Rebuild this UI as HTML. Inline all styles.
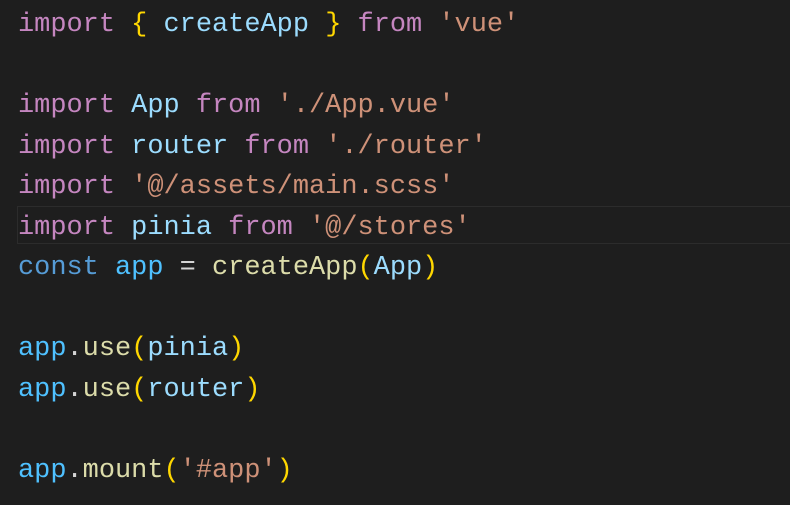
<!DOCTYPE html>
<html><head><style>
html,body{margin:0;padding:0;background:#1e1e1e;width:790px;height:505px;overflow:hidden}
pre{margin:0;position:absolute;left:18px;top:5px;font-family:"Liberation Mono",monospace;font-size:26.95px;line-height:40.5px;color:#d4d4d4}
.hl{position:absolute;left:17px;top:206px;width:780px;height:36px;border:1px solid #2c2c2c}
.k{color:#c586c0}.b{color:#ffd700}.v{color:#9cdcfe}.s{color:#ce9178}.c{color:#569cd6}.a{color:#4fc1ff}.f{color:#dcdcaa}
</style></head><body>
<div class="hl"></div>
<pre><span class="k">import</span> <span class="b">{</span> <span class="v">createApp</span> <span class="b">}</span> <span class="k">from</span> <span class="s">'vue'</span>

<span class="k">import</span> <span class="v">App</span> <span class="k">from</span> <span class="s">'./App.vue'</span>
<span class="k">import</span> <span class="v">router</span> <span class="k">from</span> <span class="s">'./router'</span>
<span class="k">import</span> <span class="s">'@/assets/main.scss'</span>
<span class="k">import</span> <span class="v">pinia</span> <span class="k">from</span> <span class="s">'@/stores'</span>
<span class="c">const</span> <span class="a">app</span> = <span class="f">createApp</span><span class="b">(</span><span class="v">App</span><span class="b">)</span>

<span class="a">app</span>.<span class="f">use</span><span class="b">(</span><span class="v">pinia</span><span class="b">)</span>
<span class="a">app</span>.<span class="f">use</span><span class="b">(</span><span class="v">router</span><span class="b">)</span>

<span class="a">app</span>.<span class="f">mount</span><span class="b">(</span><span class="s">'#app'</span><span class="b">)</span></pre>
</body></html>
